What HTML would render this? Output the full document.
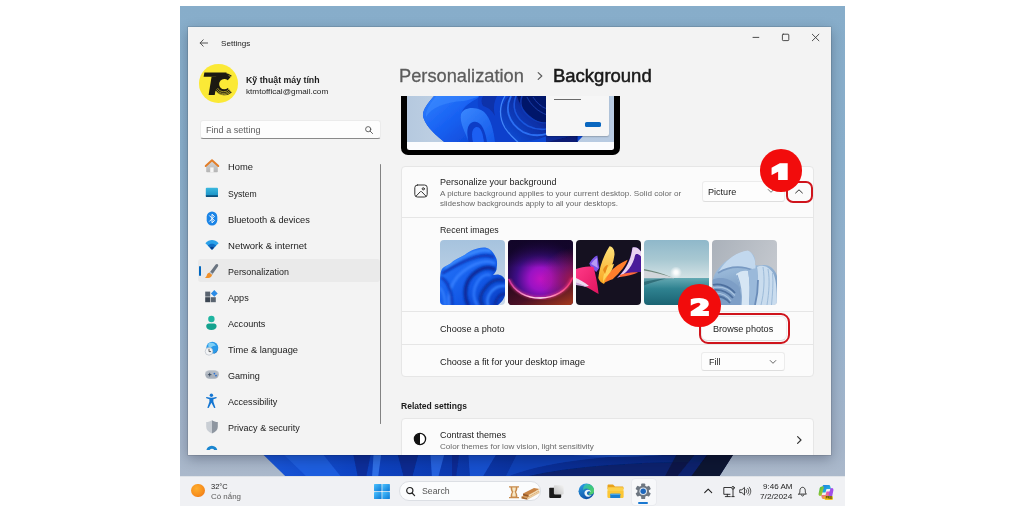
<!DOCTYPE html>
<html lang="en">
<head>
<meta charset="utf-8">
<title>Settings - Personalization - Background</title>
<style>
*{box-sizing:border-box;margin:0;padding:0}
html,body{width:1024px;height:512px;overflow:hidden;background:#fff}
body{font-family:"Liberation Sans",sans-serif;color:#1b1b1b;position:relative}
.abs{position:absolute}
.t{position:absolute;white-space:nowrap;line-height:1;transform-origin:0 50%}
#shot{position:absolute;left:180px;top:6px;width:665px;height:499px;overflow:hidden;
 background:linear-gradient(180deg,#87adca 0%,#8aafcc 30%,#97b3ce 62%,#a5b5ca 88%,#b0bccc 100%)}
/* coordinates inside #shot are page coords minus (180,6) via wrapper */
#w{position:absolute;left:-180px;top:-6px;width:1024px;height:512px}
#win{position:absolute;left:188px;top:27px;width:643px;height:428px;background:#f3f3f3;overflow:hidden;
 box-shadow:0 0 0 .5px rgba(0,0,0,.2),0 4px 12px rgba(0,0,20,.28)}
#wi{position:absolute;left:-188px;top:-27px;width:1024px;height:512px}
#task{position:absolute;left:180px;top:475.8px;width:665px;height:29.8px;background:#f0f1f4;overflow:hidden}
.card{position:absolute;background:#fbfbfb;border:1px solid #e6e6e6;border-radius:4px}
.sep{position:absolute;height:1px;background:#e6e6e6}
.nav{font-size:9.4px;color:#1b1b1b}
.dd{position:absolute;background:#fdfdfd;border:1px solid #ececec;border-bottom-color:#dedede;border-radius:3px}
.thumb{position:absolute;top:240px;width:65px;height:65px;border-radius:4px;overflow:hidden}
.thumb svg{display:block}
</style>
</head>
<body>
<div id="shot"><div id="w">

<!-- desktop bloom strip (below window) -->
<svg class="abs" style="left:180px;top:440px" width="665" height="40" viewBox="180 440 665 40">
 <defs>
  <linearGradient id="bl" x1="0" x2="1" y1="0" y2="0">
   <stop offset="0" stop-color="#1a58da"/><stop offset=".2" stop-color="#0e44c4"/>
   <stop offset=".4" stop-color="#0c3ab0"/><stop offset=".6" stop-color="#0a2f98"/><stop offset=".85" stop-color="#0a2a86"/><stop offset="1" stop-color="#0c1c4a"/>
  </linearGradient>
  <filter id="blf" x="-2%" y="-20%" width="104%" height="140%"><feGaussianBlur stdDeviation="0.7"/></filter>
  <clipPath id="blc"><polygon points="256.4,448 737.4,448 718.3,478 287.2,478"/></clipPath>
 </defs>
 <polygon points="256.4,448 737.4,448 718.3,478 287.2,478" fill="url(#bl)"/>
 <g clip-path="url(#blc)"><g filter="url(#blf)">
  <polygon points="277,448 318,448 342,478 308,478" fill="#2060e2" opacity=".85"/>
  <polygon points="352,448 372,448 366,478 358,478" fill="#0a2e9a"/>
  <polygon points="374,448 382,448 378,478 372,478" fill="#3a7af0" opacity=".8"/>
  <polygon points="396,448 420,448 412,478 404,478" fill="#082a90"/>
  <polygon points="430,448 446,448 438,478 432,478" fill="#2a6ae8" opacity=".8"/>
  <polygon points="452,448 460,448 456,478 452,478" fill="#0a2c94"/>
  <polygon points="468,448 500,448 482,478 470,478" fill="#1a56d8" opacity=".8"/>
  <path d="M505 478C540 462 600 456 690 452L700 448H520z" fill="#1346c0" opacity=".75"/>
  <path d="M520 478C560 468 620 462 700 462L708 478z" fill="#08226e"/>
  <path d="M530 448C580 458 640 458 700 450" fill="none" stroke="#2a66e0" stroke-width="2" opacity=".7"/>
  <polygon points="712,448 738,448 719,478 690,478" fill="#0a1232"/><polygon points="680,448 700,448 676,478 664,478" fill="#0a1640" opacity=".8"/>
 </g></g>
</svg>

<!-- ===================== WINDOW ===================== -->
<div id="win"><div id="wi">

<!-- title bar -->
<svg class="abs" style="left:199px;top:38px" width="10" height="10" viewBox="0 0 10 10" fill="none" stroke="#444" stroke-width="0.9" stroke-linecap="round" stroke-linejoin="round"><path d="M1.2 5H8.6M4.2 1.8L1.2 5l3 3.2"/></svg>
<span class="t" id="tSettings" style="left:220.70px;top:40.15px;font-size:8px;color:#222;transform:scaleX(1.0102)">Settings</span>
<svg class="abs" style="left:750px;top:30px" width="75" height="15" viewBox="750 30 75 15" fill="none" stroke="#3a3a3a" stroke-width="0.9" stroke-linecap="round">
 <path d="M753 37.4h5.8"/>
 <rect x="782.4" y="34.2" width="6.4" height="6.4" rx="0.8"/>
 <path d="M812.3 34.2l6.6 6.6M818.9 34.2l-6.6 6.6"/>
</svg>

<!-- profile -->
<div class="abs" style="left:199.400px;top:64px;width:38.700px;height:38.700px;border-radius:50%;background:#fbe936;overflow:hidden">
 <svg width="38.700" height="38.700" viewBox="0 0 38.700 38.700">
  <path d="M30.800 14A8.200 8.200 0 1 0 30.800 26.200" fill="none" stroke="#1c1a12" stroke-width="6"/>
  <path d="M17 27A9.800 9.800 0 0 0 32.400 27M17.500 25.400A8.300 8.300 0 0 0 31.400 25.900M18.500 24A6.800 6.800 0 0 0 30.300 24.800M29.500 11.300A9.800 9.800 0 0 1 32.800 13.900" fill="none" stroke="#fbe936" stroke-width=".6"/>
  <path d="M5.400 8.400H27.500V12.800H4.600z" fill="#1c1a12"/>
  <path d="M12.600 12.600H19.100L15.700 31H9.600z" fill="#1c1a12"/>
 </svg>
</div>
<span class="t" id="tName" style="left:245.90px;top:75.58px;font-size:8.8px;font-weight:bold;color:#1b1b1b;transform:scaleX(0.9971)">Kỹ thuật máy tính</span>
<span class="t" id="tMail" style="left:245.90px;top:87.75px;font-size:8px;color:#222;transform:scaleX(1.0219)">ktmtoffical@gmail.com</span>

<!-- search box -->
<div class="abs" style="left:199.5px;top:120.3px;width:181.5px;height:19px;background:#fdfdfd;border:1px solid #ebebeb;border-bottom:1px solid #8a8a8a;border-radius:3px"></div>
<span class="t" id="tFind" style="left:205.90px;top:125.78px;font-size:8.8px;color:#5f5f5f;transform:scaleX(1.0320)">Find a setting</span>
<svg class="abs" style="left:364px;top:125px" width="10" height="10" viewBox="0 0 10 10" fill="none" stroke="#555" stroke-width="0.9" stroke-linecap="round"><circle cx="4.2" cy="4.2" r="2.6"/><path d="M6.2 6.2L8.6 8.6"/></svg>

<!-- nav selected bg -->
<div class="abs" style="left:198.400px;top:259.200px;width:181.400px;height:22.700px;background:#eaeaea;border-radius:3px"></div>
<div class="abs" style="left:198.600px;top:266px;width:2px;height:9.800px;background:#0067c0;border-radius:1px"></div>
<!-- scrollbar -->
<div class="abs" style="left:380.100px;top:164px;width:1.300px;height:260px;background:#828282;border-radius:1px"></div>

<!-- nav labels -->
<span class="t nav" id="n1" style="left:227.50px;top:161.83px;transform:scaleX(0.9994)">Home</span>
<span class="t nav" id="n2" style="left:227.50px;top:188.53px;transform:scaleX(0.9179)">System</span>
<span class="t nav" id="n3" style="left:227.50px;top:214.53px;transform:scaleX(0.9870)">Bluetooth &amp; devices</span>
<span class="t nav" id="n4" style="left:227.50px;top:240.63px;transform:scaleX(1.0204)">Network &amp; internet</span>
<span class="t nav" id="n5" style="left:227.50px;top:266.73px;transform:scaleX(0.9499)">Personalization</span>
<span class="t nav" id="n6" style="left:227.50px;top:292.83px;transform:scaleX(0.9684)">Apps</span>
<span class="t nav" id="n7" style="left:227.50px;top:318.93px;transform:scaleX(0.9699)">Accounts</span>
<span class="t nav" id="n8" style="left:227.50px;top:345.13px;transform:scaleX(0.9925)">Time &amp; language</span>
<span class="t nav" id="n9" style="left:227.50px;top:371.23px;transform:scaleX(0.9687)">Gaming</span>
<span class="t nav" id="n10" style="left:227.50px;top:397.33px;transform:scaleX(0.9655)">Accessibility</span>
<span class="t nav" id="n11" style="left:227.50px;top:423.43px;transform:scaleX(0.9638)">Privacy &amp; security</span>

<!-- nav icons -->
<svg class="abs" style="left:204px;top:158px" width="16" height="16" viewBox="204 158 16 16">
 <defs><linearGradient id="hw" x1="0" y1="0" x2="0" y2="1"><stop offset="0" stop-color="#d6d6d6"/><stop offset="1" stop-color="#b4b4b4"/></linearGradient></defs>
 <path d="M206.200 165.600v5.700c0 .600.400 1 1 1h9.600c.600 0 1-.400 1-1v-5.700l-5.800-4.600z" fill="url(#hw)"/>
 <path d="M210.200 167.400h3.400v4.900h-3.400z" fill="#f6f6f6"/>
 <path d="M205.700 166l6.300-5.700 6.300 5.700" fill="none" stroke="#e27d28" stroke-width="1.900" stroke-linecap="round" stroke-linejoin="round"/>
</svg>
<svg class="abs" style="left:204px;top:186px" width="16" height="13" viewBox="204 186 16 13">
 <defs><linearGradient id="sy" x1="0" y1="0" x2="0" y2="1"><stop offset="0" stop-color="#3ab8de"/><stop offset="1" stop-color="#168cc2"/></linearGradient></defs>
 <rect x="205.800" y="187.800" width="12.200" height="9" rx="1" fill="url(#sy)"/>
 <rect x="205.800" y="195.200" width="12.200" height="1.700" rx=".6" fill="#0b4f7c"/>
</svg>
<svg class="abs" style="left:205px;top:210px" width="14" height="17" viewBox="205 210 14 17">
 <rect x="206.700" y="211.400" width="10.600" height="14.200" rx="5.300" fill="#1a84e6"/>
 <path d="M209.600 215.800l4.800 4.800-2.400 2.200v-8.600l2.400 2.200-4.800 4.800" fill="none" stroke="#fff" stroke-width=".95" stroke-linejoin="round" stroke-linecap="round"/>
</svg>
<svg class="abs" style="left:204px;top:238px" width="16" height="13" viewBox="204 238 16 13">
 <path d="M205.400 243.200c3.800-4.200 9.400-4.200 13.200 0l-6.600 6.600z" fill="#2aa0e8"/>
 <path d="M207.800 245.600c2.400-2.600 6-2.600 8.400 0l-4.200 4.200z" fill="#0f6cc4"/>
 <path d="M209.900 247.700c1.200-1.300 3-1.300 4.200 0l-2.100 2.100z" fill="#0a3f8a"/>
</svg>
<svg class="abs" style="left:204px;top:263px" width="16" height="16" viewBox="204 263 16 16">
 <path d="M217.600 264.200c.8.600.8 1.400.3 2.200l-5.800 8.400-2.600-2 6.200-8.200c.5-.7 1.300-.9 1.900-.4z" fill="#6a7480"/>
 <path d="M209.500 272.800l2.600 2c-.2 2-1.800 3.200-3.800 3.300-1.500.1-2.700-.1-3.500-.6 1.200-.4 1.700-1.200 2-2.300.4-1.600 1.400-2.600 2.700-2.400z" fill="#f0902a"/>
 <path d="M209.500 272.800l2.600 2 .7-1-2.600-2z" fill="#c4cad2"/>
</svg>
<svg class="abs" style="left:204px;top:289px" width="16" height="15" viewBox="204 289 16 15">
 <rect x="205.200" y="291.600" width="5" height="5" fill="#5a6470"/>
 <rect x="205.200" y="297.200" width="5" height="5" fill="#3c4652"/>
 <rect x="210.800" y="297.200" width="5" height="5" fill="#5a6470"/>
 <path d="M214.300 290l3.400 3.400-3.400 3.400-3.400-3.400z" fill="#2a8be6"/>
</svg>
<svg class="abs" style="left:205px;top:315px" width="14" height="16" viewBox="205 315 14 16">
 <circle cx="211.400" cy="319" r="3.200" fill="#1fb5a0"/>
 <path d="M206.200 326.200c0-1.600 1.200-2.600 2.600-2.600h5.200c1.400 0 2.600 1 2.600 2.600 0 2.400-2.200 3.800-5.200 3.800s-5.200-1.400-5.200-3.800z" fill="#14a28e"/>
</svg>
<svg class="abs" style="left:204px;top:341px" width="16" height="16" viewBox="204 341 16 16">
 <circle cx="212.300" cy="347.800" r="6" fill="#2a9ae8"/>
 <path d="M209 343c3-1 6 0 7 3-1.400-.6-3-.4-4 .8-1 1.200-2.400 1-3.400.2-.6-1.400-.4-3 .4-4z" fill="#7fd0f6"/>
 <path d="M214 353.400c2-1 3.400-2.600 4-4.600-.2 3-2.400 5-5 5.200z" fill="#0e5ea8"/>
 <circle cx="209" cy="351.400" r="3.800" fill="#f2f4f6" stroke="#aeb6c0" stroke-width=".6"/>
 <path d="M209 349.200v2.400h1.700" fill="none" stroke="#444" stroke-width=".8" stroke-linecap="round" stroke-linejoin="round"/>
</svg>
<svg class="abs" style="left:204px;top:369px" width="16" height="12" viewBox="204 369 16 12">
 <rect x="205.200" y="370.400" width="13.600" height="8.400" rx="4.200" fill="#a8b0ba"/>
 <rect x="205.200" y="370.400" width="13.600" height="4.400" rx="4.200" fill="#bcc3cc" opacity=".6"/>
 <path d="M208.300 374.600h2.800M209.700 373.200v2.800" stroke="#3a4a5c" stroke-width=".9" stroke-linecap="round"/>
 <circle cx="214.400" cy="373.600" r=".9" fill="#2a6fd0"/><circle cx="216" cy="375.600" r=".9" fill="#2a6fd0"/>
</svg>
<svg class="abs" style="left:205px;top:393px" width="14" height="17" viewBox="205 393 14 17">
 <circle cx="211.400" cy="395.300" r="1.700" fill="#1476d2"/>
 <path d="M206.400 398.200c-.6-.2-.4-1.300.4-1.100 3 .8 6.200.8 9.200 0 .8-.2 1 .9.400 1.100l-3 1v2.600l1.900 5.400c.3.800-.9 1.300-1.300.5l-2.600-4.900-2.600 4.900c-.4.800-1.600.3-1.300-.5l1.900-5.400v-2.600z" fill="#1476d2"/>
</svg>
<svg class="abs" style="left:205px;top:419px" width="14" height="16" viewBox="205 419 14 16">
 <defs><linearGradient id="sh" x1="0" y1="0" x2="1" y2="0"><stop offset="0" stop-color="#c9ced4"/><stop offset=".5" stop-color="#c9ced4"/><stop offset=".5" stop-color="#8e96a0"/><stop offset="1" stop-color="#8e96a0"/></linearGradient></defs>
 <path d="M212 420.200c1.800 1.200 3.600 1.800 5.800 1.900v4.700c0 3.200-2.200 5.400-5.800 6.800-3.600-1.400-5.800-3.600-5.800-6.800v-4.700c2.200-.1 4-.7 5.800-1.900z" fill="url(#sh)"/>
</svg>
<svg class="abs" style="left:205px;top:444px" width="14" height="6.300" viewBox="205 444 14 6.300">
 <path d="M207.800 451.300a4.050 4.050 0 0 1 8.100 0" fill="none" stroke="#1b86d0" stroke-width="3"/>
</svg>


<!-- heading -->
<span class="t" id="h1" style="-webkit-text-stroke:.3px #5c5c5c;left:399.40px;top:66.35px;font-size:19px;color:#5c5c5c;transform:scaleX(0.9613)">Personalization</span>
<svg class="abs" style="left:535px;top:70px" width="10" height="12" viewBox="0 0 10 12" fill="none" stroke="#5c5c5c" stroke-width="1.2" stroke-linecap="round" stroke-linejoin="round"><path d="M3.2 2.6L6.8 6 3.2 9.4"/></svg>
<span class="t" id="h2" style="left:553.20px;top:66.35px;font-size:19px;color:#1a1a1a;font-weight:normal;-webkit-text-stroke:.55px #1a1a1a;transform:scaleX(0.9733)">Background</span>

<!-- preview monitor -->
<div class="abs" style="left:395px;top:96.300px;width:235px;height:64px;overflow:hidden"><div class="abs" style="left:-395px;top:-96.300px;width:1024px;height:512px">
<div class="abs" style="left:401.100px;top:80px;width:218.700px;height:75.200px;background:#000;border-radius:7px"></div>
<div class="abs" style="left:406.800px;top:80px;width:207.600px;height:69.600px;background:#fbfcfe;border-radius:0 0 2.500px 2.500px;overflow:hidden">
 <svg class="abs" style="left:0;top:16.300px" width="207.600" height="46.200" viewBox="0 0 207.600 46.200">
  <defs>
   <filter id="pvbl" x="-5%" y="-5%" width="110%" height="110%"><feGaussianBlur stdDeviation="0.45"/></filter><linearGradient id="pvbg" x1="0" x2="1"><stop offset="0" stop-color="#b5c9df"/><stop offset=".12" stop-color="#bccee2"/><stop offset="1" stop-color="#b8cbe2"/></linearGradient>
   <linearGradient id="pvA" x1="0" y1="0" x2="1" y2="1"><stop offset="0" stop-color="#2f80ff"/><stop offset=".5" stop-color="#1861f2"/><stop offset="1" stop-color="#0d46d4"/></linearGradient>
   <linearGradient id="pvB" x1="0" y1="0" x2="1" y2="1"><stop offset="0" stop-color="#3a88ff"/><stop offset="1" stop-color="#1257e8"/></linearGradient>
   <linearGradient id="pvD" x1="0" y1="1" x2="1" y2="0"><stop offset="0" stop-color="#1453e0"/><stop offset=".6" stop-color="#0a2fa6"/><stop offset="1" stop-color="#06175e"/></linearGradient>
  </defs>
  <rect width="207.600" height="46.200" fill="url(#pvbg)"/>
  <!-- base silhouette -->
  <g filter="url(#pvbl)">
  <path d="M27 0C20 8 14 16 16.500 22c3.500 10 13.500 18 21 24.200H170C182 36 188 20 190 0z" fill="#0f49d6"/>
  <!-- petal A -->
  <path d="M27 0C20 8 14 16 16.500 22c3.500 10 13.500 18 21 24.200H63C58 36 52 26 54 18 56 10 64 6 74 0z" fill="url(#pvA)"/>
  <path d="M29 0C23 8 18 15 19 21c5-9 18-15 38-16 6-1 11-3 15-5z" fill="#3f8dff" opacity=".5"/>
  <!-- petal C (middle, darker) -->
  <path d="M72 0h30C93 10 91 20 97 30c4 8 9 12 14 16.200H88C86 30 82 18 74 14 70 12 70 6 72 0z" fill="#0c40cc"/>
  <path d="M76 0h14c-3 6-4 12-2 20-3-6-8-9-12-10-2-3-2-7 0-10z" fill="#0930aa"/>
  <!-- tube fold B -->
  <path d="M54 18c2-6 12-8 20-4 8 4 12 16 14 32.200H62C58 36 52 26 54 18z" fill="url(#pvB)"/>
  <path d="M61.500 46.200c-2-10-2-18 4.500-20.200 8-2 12 8 14 20.200z" fill="#0a3cc6"/>
  <path d="M66 46.200c-2-8-1-14 3-15.200 5-1 7 7 8 15.200z" fill="#1b5ff2"/>
  <!-- right layered petals -->
  <path d="M102 0h38v40c-10 4-20 6.200-29 6.200C106 42 101 38 97 30 91 20 93 10 102 0z" fill="url(#pvD)"/>
  <path d="M110 0h30v28C126 26 114 14 110 0z" fill="#06186a"/>
  <path d="M104 0c-6 12-4 26 12 36 8 4 16 4 24 2" fill="none" stroke="#2f74f8" stroke-width="1.800" opacity=".9"/>
  <path d="M109 0c-4 10-2 22 12 30 8 4 13 4 19 3" fill="none" stroke="#1c58e0" stroke-width="1.600" opacity=".9"/>
  <path d="M115 0c-3 8 0 17 12 24 5 3 9 3 13 3" fill="none" stroke="#0f3cb8" stroke-width="1.400"/>
  <path d="M120 1c4 8 10 14 20 18M126 1c3 5 8 10 14 12" fill="none" stroke="#1640b0" stroke-width=".9"/>
  <path d="M98 0c-6 10-6 22 0 32 4 6 8 10 13 14.200" fill="none" stroke="#4a90ff" stroke-width="1.300" opacity=".85"/>
  <path d="M139 40h32v6.200h-32z" fill="#0a2c96"/>
  <path d="M139 46.200C150 44 160 40 170 39v7.200z" fill="#071f74"/>
  </g>
 </svg>
 <!-- dialog -->
 <div class="abs" style="left:139.600px;top:0;width:62.400px;height:55.800px;background:#f6f6f6;border-radius:0 0 2px 2px;box-shadow:0 .5px 1.500px rgba(0,0,0,.22)"></div>
 <div class="abs" style="left:147.200px;top:18.500px;width:27px;height:.9px;background:#6a6a6a"></div>
 <div class="abs" style="left:178.200px;top:41.600px;width:16.200px;height:5.200px;background:#0a67c0;border-radius:1.600px"></div>
</div>
</div></div>
<!-- card 1 -->
<div class="card" style="left:401.3px;top:166.3px;width:413px;height:211px"></div>
<div class="sep" style="left:402.3px;top:216.5px;width:411px"></div>
<div class="sep" style="left:402.3px;top:311px;width:411px"></div>
<div class="sep" style="left:402.3px;top:344px;width:411px"></div>
<svg class="abs" style="left:412.5px;top:183px" width="16" height="16" viewBox="0 0 16 16" fill="none" stroke="#333" stroke-width="1" stroke-linecap="round" stroke-linejoin="round">
 <rect x="1.8" y="2" width="12.4" height="12" rx="2.6"/>
 <circle cx="10.3" cy="5.8" r="1.1"/>
 <path d="M3.2 13l4-4.2c.5-.5 1.100-.5 1.600 0l4 4.200"/>
</svg>
<span class="t" id="c1a" style="left:439.80px;top:176.83px;font-size:9.4px;color:#1b1b1b;transform:scaleX(0.9585)">Personalize your background</span>
<span class="t" id="c1b" style="left:439.80px;top:189.85px;font-size:8px;color:#686868;transform:scaleX(1.0138)">A picture background applies to your current desktop. Solid color or</span>
<span class="t" id="c1c" style="left:439.80px;top:199.65px;font-size:8px;color:#686868;transform:scaleX(1.0001)">slideshow backgrounds apply to all your desktops.</span>
<div class="dd" style="left:701.500px;top:181.300px;width:83.700px;height:20.400px"></div>
<span class="t" id="c1d" style="left:708.45px;top:187.65px;font-size:9.2px;color:#1b1b1b;transform:scaleX(0.9874)">Picture</span>
<svg class="abs" style="left:767px;top:188px" width="8" height="6" viewBox="0 0 8 6" fill="none" stroke="#666" stroke-width=".9" stroke-linecap="round" stroke-linejoin="round"><path d="M1.2 1.5L4 4.300 6.800 1.500"/></svg>
<svg class="abs" style="left:794px;top:188px" width="10" height="7" viewBox="0 0 10 7" fill="none" stroke="#333" stroke-width="1" stroke-linecap="round" stroke-linejoin="round"><path d="M1.6 5L5 1.800 8.400 5"/></svg>

<span class="t" id="c1e" style="left:439.80px;top:225.23px;font-size:9.4px;color:#1b1b1b;transform:scaleX(0.9387)">Recent images</span>
<!-- thumbs -->
<div class="thumb" style="left:440px"><svg width="65" height="65" viewBox="0 0 65 65">
 <defs><filter id="bl2" x="-10%" y="-10%" width="120%" height="120%"><feGaussianBlur stdDeviation="0.85"/></filter><filter id="bl1" x="-10%" y="-10%" width="120%" height="120%"><feGaussianBlur stdDeviation="0.9"/></filter><linearGradient id="t1bg" x1="0" y1="0" x2="0" y2="1"><stop offset="0" stop-color="#a6c3de"/><stop offset="1" stop-color="#cbd9e9"/></linearGradient>
 <clipPath id="t1clip"><path d="M43.700 7.600C36 8 30 11 25 14.800 19 18 14 20 10.500 23.500 6 26 3 27 1.800 29.200 0 33 0 40 0 45V65H58c4-3 7-7 7-11.200V39.400c-2-3.400-4-4.400-5.400-4.400-2.600-1-4.600 0-6.600 0 2-2 3.700-4 3.700-7.200.8-5.800.3-8.800-1.500-11.600C52 10 48 7.600 43.700 7.600z"/></clipPath><linearGradient id="t1a" x1="0" y1="0" x2="1" y2="1"><stop offset="0" stop-color="#2a7cff"/><stop offset=".6" stop-color="#1258e6"/><stop offset="1" stop-color="#0a3cc0"/></linearGradient></defs>
 <rect width="65" height="65" fill="url(#t1bg)"/>
 <path d="M43.700 7.600C36 8 30 11 25 14.800 19 18 14 20 10.500 23.500 6 26 3 27 1.800 29.200 0 33 0 40 0 45V65H58c4-3 7-7 7-11.200V39.400c-2-3.400-4-4.400-5.400-4.400-2.600-1-4.600 0-6.600 0 2-2 3.700-4 3.700-7.200.8-5.800.3-8.800-1.500-11.600C52 10 48 7.600 43.700 7.600z" fill="url(#t1a)"/>
 <g fill="none" stroke-linecap="round" filter="url(#bl2)" clip-path="url(#t1clip)">
  <path d="M50 11C40 8 24 15 6 27" stroke="#3f8eff" stroke-width="2.400"/>
  <path d="M53 17C42 12 24 20 3 33" stroke="#0a36b4" stroke-width="2.600"/>
  <path d="M54 23C44 18 28 26 18 36 11 44 8 52 9 65" stroke="#347fff" stroke-width="3"/>
  <path d="M54 29C45 25 34 31 28 41c-4 8-3 18 0 24" stroke="#072a9a" stroke-width="3.800"/>
  <path d="M50 35C44 33 38 39 35 47c-2 6-1 13 2 18" stroke="#2e78fc" stroke-width="2.600"/>
  <path d="M63 40C55 38 48 43 43 51c-3 5-3 10-1 14" stroke="#08309e" stroke-width="3.200"/>
  <path d="M65 46C58 45 52 49 49 55c-2 4-2 7-1 10" stroke="#3682ff" stroke-width="2.400"/>
  <path d="M2 38C8 42 12 52 12 65" stroke="#0a38b8" stroke-width="2.600"/>
  <path d="M65 54C60 54 56 58 55 65" stroke="#082c9c" stroke-width="2.800"/>
  <path d="M0 48C4 52 5 58 5 65" stroke="#3a86ff" stroke-width="1.800"/>
 </g>
</svg></div>
<div class="thumb" style="left:508px"><svg width="65" height="65" viewBox="0 0 65 65">
 <defs><radialGradient id="t2a" cx=".5" cy=".6" r=".62"><stop offset="0" stop-color="#c013c2"/><stop offset=".28" stop-color="#9a12c4"/><stop offset=".6" stop-color="#3e0e86"/><stop offset="1" stop-color="#14062e"/></radialGradient><linearGradient id="t2t" x1="0" y1="0" x2="0" y2="1"><stop offset="0" stop-color="#120528" stop-opacity=".9"/><stop offset=".2" stop-color="#120528" stop-opacity=".5"/><stop offset=".42" stop-color="#120528" stop-opacity="0"/></linearGradient>
 <linearGradient id="t2d" x1="0" y1="0" x2="1" y2="1"><stop offset="0" stop-color="#1a0618"/><stop offset=".55" stop-color="#4a1026"/><stop offset="1" stop-color="#a83a1c"/></linearGradient>
 <linearGradient id="t2s" x1="0" y1="0" x2="1" y2="0"><stop offset="0" stop-color="#d02a9a"/><stop offset=".3" stop-color="#ffb0d0"/><stop offset=".5" stop-color="#fff0f4"/><stop offset=".7" stop-color="#ff8ab4"/><stop offset="1" stop-color="#f02a6a"/></linearGradient>
 <radialGradient id="t2r" cx="1" cy=".62" r=".5"><stop offset="0" stop-color="#b01a40" stop-opacity=".9"/><stop offset=".5" stop-color="#c01a5a" stop-opacity=".4"/><stop offset="1" stop-color="#c01a5a" stop-opacity="0"/></radialGradient></defs>
 <rect width="65" height="65" fill="url(#t2a)"/>
 <rect width="65" height="65" fill="url(#t2t)"/><rect width="65" height="65" fill="url(#t2r)"/>
 <path d="M0 38C9 66 56 66 65 37V65H0z" fill="url(#t2d)"/>
 <path d="M1 39.500C11 64 54 64 64.500 38" fill="none" stroke="#ff3a90" stroke-width="3.600" opacity=".5" filter="url(#bl1)"/>
 <path d="M1 39.500C11 64.500 54 64.500 64.500 38" fill="none" stroke="url(#t2s)" stroke-width="1.500" stroke-linecap="round"/>
</svg></div>
<div class="thumb" style="left:576px"><svg width="65" height="65" viewBox="0 0 65 65">
 <defs><linearGradient id="t3p" x1="0" y1="0" x2="1" y2="1"><stop offset="0" stop-color="#ff3a88"/><stop offset="1" stop-color="#e0145e"/></linearGradient>
 <linearGradient id="t3y" x1="0" y1="0" x2="0" y2="1"><stop offset="0" stop-color="#ffe27a"/><stop offset="1" stop-color="#f8a41e"/></linearGradient></defs>
 <rect width="65" height="65" fill="#151120"/>
 <path d="M56 8c4-2 7 0 9 3.500V32c-6 0-14 2-24 6 8-8 14-18 15-30z" fill="#4a1a9a"/>
 <path d="M56.500 7.500c3-1 6 .5 8.500 4v5c-3-3-5-3-6-1-2 10-8 18-18 22.500 9-8 14-18 15.500-30.500z" fill="#e9d2f0"/>
 <path d="M44 35c6-2 12-3 18-2.500-5 2-11 3.500-18 4.500z" fill="#ff6a3a"/>
 <path d="M13.300 23.400c2-4 5-7 8-8 1 4 1 8 2 12.500l-3 4c-3-2-6-5-7-8.500z" fill="#7a52e6"/>
 <path d="M15 24c2-3 4-5 6-6 0 4 0 7 1 10z" fill="#b79af4"/>
 <path d="M0 29c6-2 12-3 17.600-2 2 8 4 17 5 27-5-3-9-5-13-7.500C6 45 2 44 0 42z" fill="url(#t3p)"/>
 <path d="M0 38c4 2 8 4 13 8l-4 .5C6 45 3 44 0 43z" fill="#eadcf0"/>
 <path d="M0 42.500c4 1 8 3 12 5-4-1-8-2-12-2.500z" fill="#c8a8d8"/>
 <path d="M32 33.500c6-6 13-11 19.600-13.700-2 6-7 12-15 19.500-3 1-6 2-9 4 1-3 2-6 4.400-9.800z" fill="#ff7e2c"/>
 <path d="M33.500 6.300c3.600.6 5.200 4 5 8.400-1 8-4 16-8 23-1 3-2 4.500-2.400 6.300-2.600-1-5-3.400-5.800-6.100 1-10 5.200-22.600 11.200-31.600z" fill="url(#t3y)"/>
 <path d="M30 30c2-4 5-6 8-6-1 4-3 8-6 11-2 2-4 4-4.500 8-1-5 0-9 2.500-13z" fill="#ffd45a"/>
 <path d="M27 30c1-3 3-5 5-5-1 3-2 6-3 9z" fill="#e88a1a"/>
</svg></div>
<div class="thumb" style="left:644px"><svg width="65" height="65" viewBox="0 0 65 65">
 <defs><linearGradient id="t4a" x1="0" y1="0" x2="0" y2="1"><stop offset="0" stop-color="#8fb8ca"/><stop offset=".3" stop-color="#a8c8d2"/><stop offset=".585" stop-color="#d3e2e5"/><stop offset=".59" stop-color="#63a8b2"/><stop offset=".75" stop-color="#2f8290"/><stop offset="1" stop-color="#1a6372"/></linearGradient>
 <radialGradient id="t4s" cx=".5" cy=".5" r=".5"><stop offset="0" stop-color="#fff"/><stop offset=".3" stop-color="#fff" stop-opacity=".9"/><stop offset="1" stop-color="#fff" stop-opacity="0"/></radialGradient></defs>
 <rect width="65" height="65" fill="url(#t4a)"/>
 <path d="M0 29c9 1.600 18 4.400 28 8.400H0z" fill="#6f887c"/>
 <path d="M0 30.600c9 1.400 19 4 30 7.400v.6H0z" fill="#d2d6da"/>
 <path d="M0 38.400h32C21 40 9 42 0 45.500z" fill="#5a9aa4"/>
 <path d="M0 41.800c7-1.500 14-2.600 22-3.200-7 2-15 4-22 7z" fill="#1f5c68" opacity=".7"/>
 <circle cx="32" cy="32.400" r="6" fill="url(#t4s)"/>
</svg></div>
<div class="thumb" style="left:712px"><svg width="65" height="65" viewBox="0 0 65 65">
 <defs><linearGradient id="t5bg" x1="0" y1="0" x2="1" y2=".5"><stop offset="0" stop-color="#aab1ba"/><stop offset="1" stop-color="#c5c9cf"/></linearGradient>
 <linearGradient id="t5a" x1=".2" y1="0" x2=".4" y2="1"><stop offset="0" stop-color="#b8d1ea"/><stop offset=".5" stop-color="#95b5d6"/><stop offset="1" stop-color="#6b8db6"/></linearGradient>
 <clipPath id="t5c"><path d="M35.800 10.400c-7 1-13 4-18.800 8.600C11 23 7 27 4 32 1.500 36 .4 40 .4 43.600L7 65h58V36c-1-4-4-8-8-10-2-1-4-1.200-5.300-1.100-3 .3-5 1-8.700 0 1-6-1-12-7.200-14.500z"/></clipPath>
 <filter id="t5f" x="-10%" y="-10%" width="120%" height="120%"><feGaussianBlur stdDeviation="0.6"/></filter></defs>
 <rect width="65" height="65" fill="url(#t5bg)"/>
 <g clip-path="url(#t5c)"><g filter="url(#t5f)">
  <rect width="65" height="65" fill="url(#t5a)"/>
  <path d="M36 10c-8 1-15 5-21 11-4 4-7 8-9 12 8-5 18-7 28-5 4 1 7 2 9 3 2-8-1-17-7-21z" fill="#c2d8ee"/>
  <path d="M6 33c8-5 18-7 28-5 4 1 7 2 9 3" fill="none" stroke="#7899c2" stroke-width="1.600"/>
  <path d="M0 40c8-4 18-2 26 6l4 19H6z" fill="#7d9ec6"/>
  <path d="M0 45c8-2 17 1 23 8M1 50c8-1 15 2 20 8M3 56c6 0 11 2 15 7" fill="none" stroke="#4e6f9e" stroke-width="1.800"/>
  <path d="M1 47.500c8-1.500 16 1 22 8M3 53c7 0 12 2 16 8" fill="none" stroke="#a9c4e0" stroke-width="1.200"/>
  <path d="M24 34c4-3 8-4 12-3 2 10 2 22 1 34H29c1-12-1-22-5-31z" fill="#d6e6f4"/>
  <path d="M36 31c3-2 6-3 9-2 2 10 1 22-2 36h-6c1-12 1-24-1-34z" fill="#9ab9da"/>
  <path d="M45 27c6-3 12 0 16 6 3 6 4 14 4 32H43c3-14 4-28 2-38z" fill="#c9dcee"/>
  <path d="M51 27c2 12 1 26-2 38M56 29c2 11 1 23-1 36M60.500 33c1 10 0 21-1 32" fill="none" stroke="#9dbbd9" stroke-width="1"/>
  <path d="M43 65c2-8 3-16 3-25" fill="none" stroke="#6a8cb8" stroke-width="1.800"/>
  <path d="M29 65c1-10 0-20-4-30" fill="none" stroke="#88a9cf" stroke-width="1.200"/>
 </g></g>
</svg></div>
<span class="t" id="c1f" style="left:439.80px;top:323.53px;font-size:9.4px;color:#1b1b1b;transform:scaleX(0.9743)">Choose a photo</span>
<div class="dd" style="left:701px;top:316px;width:86px;height:24.5px;border-radius:6px"></div>
<span class="t" id="c1g" style="left:713.00px;top:324.85px;font-size:9.2px;color:#1b1b1b;transform:scaleX(0.9904)">Browse photos</span>
<span class="t" id="c1h" style="left:439.80px;top:357.13px;font-size:9.4px;color:#1b1b1b;transform:scaleX(0.9804)">Choose a fit for your desktop image</span>
<div class="dd" style="left:701.3px;top:352.2px;width:83.7px;height:19.2px"></div>
<span class="t" id="c1i" style="left:708.50px;top:357.55px;font-size:9.2px;color:#1b1b1b;transform:scaleX(0.9702)">Fill</span>
<svg class="abs" style="left:768.5px;top:358.500px" width="8" height="6" viewBox="0 0 8 6" fill="none" stroke="#555" stroke-width=".9" stroke-linecap="round" stroke-linejoin="round"><path d="M1.2 1.5L4 4.300 6.800 1.500"/></svg>


<!-- related -->
<span class="t" id="r0" style="left:401.20px;top:402.05px;font-size:9.2px;font-weight:bold;color:#1b1b1b;transform:scaleX(0.9286)">Related settings</span>
<div class="card" style="left:401.3px;top:417.800px;width:413px;height:60px"></div>
<svg class="abs" style="left:413.200px;top:432.300px" width="14" height="14" viewBox="0 0 14 14"><circle cx="7" cy="7" r="5.600" fill="#fff" stroke="#111" stroke-width="1.300"/><path d="M7 1.400a5.600 5.600 0 0 0 0 11.200z" fill="#111"/></svg>
<span class="t" id="r1" style="left:439.80px;top:430.03px;font-size:9.4px;color:#1b1b1b;transform:scaleX(0.9596)">Contrast themes</span>
<span class="t" id="r2" style="left:439.80px;top:442.85px;font-size:8px;color:#686868;transform:scaleX(1.0121)">Color themes for low vision, light sensitivity</span>
<svg class="abs" style="left:794.600px;top:434.600px" width="8" height="10" viewBox="0 0 8 10" fill="none" stroke="#333" stroke-width="1.150" stroke-linecap="round" stroke-linejoin="round"><path d="M2.600 1.600L6 5 2.600 8.400"/></svg>


</div></div>
<!-- =================== END WINDOW =================== -->

<!-- annotations -->
<div class="abs" style="left:786px;top:181px;width:26.5px;height:22px;border:2px solid #cf141c;border-radius:7px"></div>
<div class="abs" style="left:698.500px;top:313px;width:91px;height:30.500px;border:2px solid #cf141c;border-radius:9px"></div>
<div class="abs" style="left:760px;top:149.300px;width:42.400px;height:42.400px;border-radius:50%;background:#f20c0c"></div>
<div class="abs" style="left:678.200px;top:284.200px;width:42.600px;height:42.600px;border-radius:50%;background:#f20c0c"></div>
<div class="abs" id="b1c" style="left:762px;top:150px;width:36px;height:29.7px;overflow:hidden"><span class="t" id="b1" style="left:8.600px;top:10.600px;font-size:29px;font-weight:bold;color:#fff;-webkit-text-stroke:3px #fff;transform-origin:0 0;transform:scale(1.36,1.09)">1</span></div>
<span class="t" id="b2" style="left:690.300px;top:297.900px;font-size:21px;font-weight:bold;color:#fff;-webkit-text-stroke:2.2px #fff;font-family:'DejaVu Sans','Liberation Sans',sans-serif;transform:scaleX(1.36)">2</span>


</div></div>

<!-- taskbar -->
<div id="task"><div class="abs" style="left:-180px;top:-475.800px;width:1024px;height:512px">
 <div class="abs" style="left:180px;top:475.800px;width:665px;height:.7px;background:#dfe3e8"></div>
 <!-- weather -->
 <div class="abs" style="left:191.300px;top:484px;width:13.400px;height:13.400px;border-radius:50%;background:radial-gradient(circle at 40% 35%,#ffae2e 0%,#f7901e 55%,#ec6a12 100%)"></div>
 <span class="t" id="k1" style="left:210.60px;top:482.95px;font-size:8px;color:#1b1b1b;transform:scaleX(0.9343)">32°C</span>
 <span class="t" id="k2" style="left:210.60px;top:493.25px;font-size:8px;color:#5a5a5a;transform:scaleX(0.9917)">Có nắng</span>
 <!-- start -->
 <svg class="abs" style="left:374px;top:483.800px" width="16" height="15.200" viewBox="0 0 16 15.200">
  <defs><linearGradient id="wg" x1="0" y1="0" x2="1" y2="1"><stop offset="0" stop-color="#4cc2ff"/><stop offset="1" stop-color="#0a78d4"/></linearGradient></defs>
  <rect x="0" y="0" width="7.600" height="7.200" rx=".6" fill="url(#wg)"/><rect x="8.300" y="0" width="7.600" height="7.200" rx=".6" fill="url(#wg)"/>
  <rect x="0" y="7.900" width="7.600" height="7.200" rx=".6" fill="url(#wg)"/><rect x="8.300" y="7.900" width="7.600" height="7.200" rx=".6" fill="url(#wg)"/>
 </svg>
 <!-- search pill -->
 <div class="abs" style="left:399px;top:481.400px;width:141.600px;height:20px;border-radius:10px;background:#fbfcfd;border:.6px solid #dcdfe4"></div>
 <svg class="abs" style="left:404.500px;top:486px" width="11" height="11" viewBox="0 0 11 11" fill="none" stroke="#222" stroke-width="1.200" stroke-linecap="round"><circle cx="4.800" cy="4.600" r="3.100"/><path d="M7.100 7L9.600 9.600"/></svg>
 <span class="t" id="k3" style="left:421.60px;top:486.57px;font-size:9px;color:#555;transform:scaleX(0.9709)">Search</span>
 <!-- search highlight art -->
 <svg class="abs" style="left:507px;top:484px" width="34" height="17" viewBox="507 484 34 17">
  <path d="M509 486.300h10v1.200h-1.600c0 3-.8 3.600-1.400 4.600.6 1 1.400 1.800 1.400 4.800h1.600v1.400h-10v-1.400h1.600c0-3 .8-3.800 1.400-4.800-.6-1-1.400-1.600-1.400-4.600H509z" fill="#c88a4a"/>
  <path d="M512.200 487.600h3.600c0 2.400-.6 3.200-1.200 4.200.6 1 1.200 1.800 1.200 4.600h-3.600c0-2.800.6-3.600 1.200-4.600-.6-1-1.200-1.800-1.200-4.200z" fill="#f6e6c4"/>
  <path d="M521.500 496.500l12-6.500 6 1.200-12 6.800z" fill="#d99a52"/>
  <path d="M521.500 496.500l6 1.500v1.800l-6-1.400z" fill="#a86a30"/>
  <path d="M527.500 498l12-6.800v1.800l-12 6.800z" fill="#e8c89a"/>
  <path d="M523 493.600l11-5.600 5.500 1-11 6z" fill="#c98444"/>
  <path d="M528.500 495l11-6v1.600l-11 6.200z" fill="#f0dcb8"/>
  <path d="M523 493.600l5.500 1.400v1.800l-5.500-1.400z" fill="#96592a"/>
 </svg>
 <!-- task view -->
 <svg class="abs" style="left:548px;top:484px" width="17" height="15" viewBox="548 484 17 15">
  <defs><linearGradient id="tvg" x1="0" y1="1" x2="1" y2="0"><stop offset="0" stop-color="#bdbdbd"/><stop offset="1" stop-color="#f4f4f4"/></linearGradient></defs>
  <rect x="549.200" y="487.700" width="12" height="10.200" rx=".8" fill="#1a1a1a"/>
  <rect x="553.900" y="485.200" width="9.800" height="9.200" rx=".8" fill="url(#tvg)"/>
 </svg>
 <!-- edge -->
 <svg class="abs" style="left:577.500px;top:482.900px" width="16.700" height="16.700" viewBox="0 0 32 32">
  <defs><linearGradient id="eg1" x1=".2" y1="0" x2=".6" y2="1"><stop offset="0" stop-color="#2b9be4"/><stop offset="1" stop-color="#0c4fa4"/></linearGradient>
  <linearGradient id="eg2" x1="0" y1="0" x2="1" y2="1"><stop offset="0" stop-color="#2fb4d0"/><stop offset=".5" stop-color="#3cc87c"/><stop offset="1" stop-color="#5ad06a"/></linearGradient></defs>
  <circle cx="16" cy="16" r="15" fill="url(#eg1)"/>
  <path d="M14 2.500C22 0 31 6 31 15c0 5-4 7.500-7.500 7.500-2 0-3.500-.5-3.900-1.500 2.400-1 3.900-3 3.400-5.500-.5-3.500-4-5.500-7.500-5-2.500.5-4.500 2-5.500 4C9.500 9 11 5 14 2.500z" fill="url(#eg2)"/>
  <path d="M12.300 19.400c0-3.800 3.100-6.400 6.800-6.400 3 0 5.300 1.700 5.700 4.100-1.100-.9-2.600-1.400-4.200-1.100-2.300.3-3.700 2-3.400 4.200.3 2.300 2.500 3.700 5.300 3.700 1.400 0 2.600-.3 3.600-.9-1.600 2.300-4.200 3.400-7 3.400-4 0-6.800-3-6.800-7z" fill="#eaf4fa"/>
 </svg>
 <!-- explorer -->
 <svg class="abs" style="left:606.500px;top:484px" width="17" height="14.600" viewBox="0 0 34 29">
  <path d="M1 3.500C1 2 2 1 3.500 1H12l4 4h14.500C32 5 33 6 33 7.500V10H1z" fill="#e8a21a"/>
  <rect x="1" y="6.500" width="32" height="21.500" rx="2.400" fill="#fcd04a"/>
  <path d="M1 14h32v11.600c0 1.400-1 2.400-2.400 2.400H3.400C2 28 1 27 1 25.600z" fill="#fbbf24" opacity=".55"/>
  <rect x="6.500" y="19.500" width="20" height="8.500" rx="1" fill="#1a7fd2"/>
  <rect x="6.500" y="19.500" width="20" height="2.600" rx="1" fill="#4aa8ec"/>
 </svg>
 <!-- settings (active) -->
 <div class="abs" style="left:632px;top:479.200px;width:24px;height:25.400px;border-radius:3px;background:#f7f8fa;box-shadow:0 0 0 .5px #e3e6ea"></div>
 <svg class="abs" style="left:635.200px;top:483.200px" width="16.400" height="16.400" viewBox="-17 -17 34 34">
  <g fill="#6d7681">
   <circle r="12"/>
   <g id="tooth"><rect x="-4.200" y="-16.200" width="8.400" height="8" rx="1.800"/></g>
   <use href="#tooth" transform="rotate(60)"/><use href="#tooth" transform="rotate(120)"/><use href="#tooth" transform="rotate(180)"/><use href="#tooth" transform="rotate(240)"/><use href="#tooth" transform="rotate(300)"/>
  </g>
  <circle r="7.800" fill="#dde5ee"/>
  <circle r="5.600" fill="#1c66bc"/>
 </svg>
 <div class="abs" style="left:638.300px;top:501.800px;width:9.800px;height:2px;border-radius:1px;background:#1a78d0"></div>
 <!-- tray -->
 <svg class="abs" style="left:703px;top:486px" width="10" height="9" viewBox="703 486 10 9" fill="none" stroke="#222" stroke-width="1.100" stroke-linecap="round" stroke-linejoin="round"><path d="M704.700 492.600l3.500-3.500 3.500 3.500"/></svg>
 <svg class="abs" style="left:722px;top:484.500px" width="14" height="13" viewBox="722 484.500 14 13" fill="none" stroke="#222" stroke-width=".9" stroke-linecap="round" stroke-linejoin="round">
  <path d="M731 487h-7.200v6.800h6.200M727.300 493.800v2.200M725.300 496.100h5"/>
  <circle cx="733" cy="487.300" r="1.300"/><path d="M733 488.600v7.400M731.800 496.100h2.400"/>
 </svg>
 <svg class="abs" style="left:738.500px;top:486px" width="13" height="11" viewBox="738.500 486 13 11" fill="none" stroke="#222" stroke-width=".85" stroke-linecap="round" stroke-linejoin="round">
  <path d="M739.600 489.800h1.800l2.600-2.400v7.600l-2.600-2.400h-1.800z"/>
  <path d="M745.600 489.600c.8.900.8 2.300 0 3.200M747.200 488.300c1.500 1.700 1.500 4.100 0 5.800M748.800 487.200c2 2.300 2 5.700 0 8" stroke-width=".75"/>
 </svg>
 <span class="t" id="k4" style="left:763.10px;top:482.75px;font-size:8px;color:#1b1b1b;transform:scaleX(1.0048)">9:46 AM</span>
 <span class="t" id="k5" style="left:760.30px;top:493.25px;font-size:8px;color:#1b1b1b;transform:scaleX(1.0372)">7/2/2024</span>
 <svg class="abs" style="left:796.500px;top:485.500px" width="11" height="12" viewBox="796.500 485.500 11 12" fill="none" stroke="#222" stroke-width=".9" stroke-linecap="round" stroke-linejoin="round">
  <path d="M798.300 493.600h7.600c-.9-.9-1.100-1.700-1.100-3.500 0-1.800-1.100-3.300-2.700-3.300s-2.700 1.500-2.700 3.300c0 1.800-.2 2.600-1.100 3.500zM800.900 494.500c.2.700.6 1 1.200 1s1-.3 1.200-1"/>
 </svg>
 <!-- copilot -->
 <svg class="abs" style="left:818px;top:483.600px" width="16" height="16.400" viewBox="0 0 32 33">
  <defs>
   <linearGradient id="cp1" x1="0" y1="0" x2="1" y2="1"><stop offset="0" stop-color="#1a7ae8"/><stop offset="1" stop-color="#27c2d8"/></linearGradient>
   <linearGradient id="cp2" x1="0" y1="0" x2="0" y2="1"><stop offset="0" stop-color="#e04ac8"/><stop offset="1" stop-color="#f0a040"/></linearGradient>
   <linearGradient id="cp3" x1="0" y1="0" x2="1" y2="1"><stop offset="0" stop-color="#2ab84a"/><stop offset="1" stop-color="#e8d020"/></linearGradient>
  </defs>
  <path d="M12 2h9c2 0 3 1 3.600 3l1.400 5h-9l-2 7H6l3-12c.4-2 1.400-3 3-3z" fill="url(#cp1)"/>
  <path d="M20 30h-9c-2 0-3-1-3.600-3L6 22h9l2-7h9l-3 12c-.4 2-1.400 3-3 3z" fill="url(#cp2)"/>
  <path d="M3 10c0-3 2-5 5-5h4L8 20c-.4 2-1.400 4-4 4-2 0-3-2-3-4z" fill="url(#cp3)"/>
  <path d="M29 22c0 3-2 5-5 5h-4l4-15c.4-2 1.400-4 4-4 2 0 3 2 3 4z" fill="#a050e8"/>
  <rect x="13" y="24" width="17" height="8" rx="2.400" fill="#f2c81e"/>
  <text x="21.500" y="30.600" font-family="Liberation Sans,sans-serif" font-weight="bold" font-size="6.500" text-anchor="middle" fill="#3a2a00">PRE</text>
 </svg>
</div></div>


</body>
</html>
